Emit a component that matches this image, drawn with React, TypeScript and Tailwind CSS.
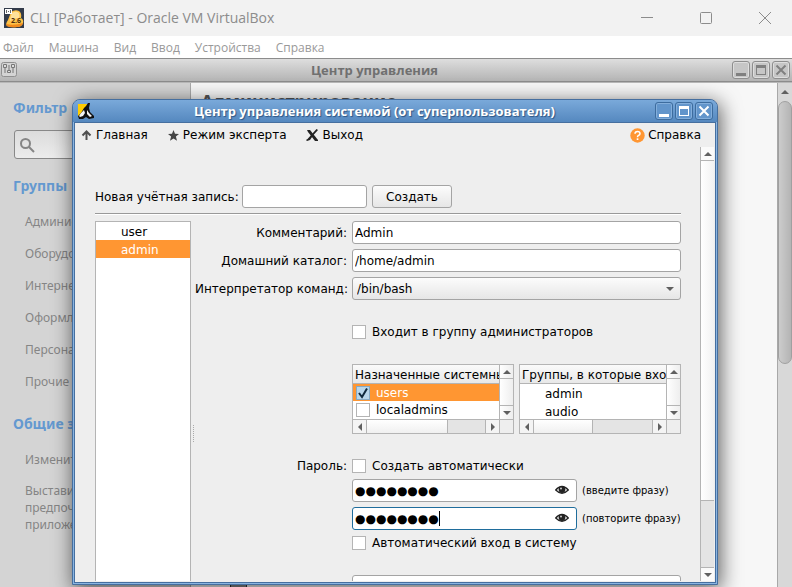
import type { ReactNode } from "react";

const UI = "font-['DejaVu_Sans','Noto_Sans',sans-serif]";

function Arrow({ dir }: { dir: "up" | "down" | "left" | "right" }) {
  const points = {
    up: "0,5 4,1 8,5",
    down: "0,1 8,1 4,5",
    left: "5,0 1,4 5,8",
    right: "1,0 5,4 1,8",
  }[dir];
  const vertical = dir === "up" || dir === "down";
  return (
    <svg width={vertical ? 8 : 6} height={vertical ? 6 : 8} className="shrink-0" aria-hidden="true">
      <polygon points={points} fill="#606060" />
    </svg>
  );
}

function FrameButtons({ active }: { active: boolean }) {
  const color = active ? "#ffffff" : "#808080";
  const glyphs: [string, ReactNode][] = [
    ["Свернуть", <rect key="m" x="3" y="11" width="10" height="3" fill={color} />],
    [
      "Развернуть",
      <g key="x">
        <rect x="3.5" y="3.5" width="9" height="9" fill="none" stroke={color} />
        <rect x="3" y="3" width="10" height="3" fill={color} />
      </g>,
    ],
    ["Закрыть", <path key="c" d="M3.500 3.500l9 9M12.500 3.500l-9 9" stroke={color} strokeWidth="2" fill="none" />],
  ];
  return (
    <div className="flex shrink-0 gap-0.5">
      {glyphs.map(([label, glyph]) => (
        <button
          key={label}
          aria-label={label}
          className={
            active
              ? "size-[18px] rounded-[3px] border border-[#3d6c9e] bg-[#6295cb] shadow-[inset_0_0_0_1px_#83aedb]"
              : "size-[18px] rounded-[3px] border border-[#8e8e8e] bg-[#c6c6c6] shadow-[inset_0_0_0_1px_#dedede]"
          }
        >
          <svg width="16" height="16" aria-hidden="true">{glyph}</svg>
        </button>
      ))}
    </div>
  );
}

function VmTitleBar() {
  return (
    <header className="flex h-9 shrink-0 items-center bg-[#f2f2f2] pl-1 font-['Open_Sans','Noto_Sans',sans-serif]">
      <svg width="20" height="20" viewBox="0 0 20 20" aria-hidden="true">
        <rect width="20" height="20" fill="#333b4a" />
        <path d="M7 4q4-3 8-1 3 2 2 7 3 2 2 5-1 4-6 4-6 1-10-1-2-2 1-6z" fill="#ffc247" />
        <path d="M8 5q4-3 7 0 1 3 0 5-5 0-9 3 0-4 2-8z" fill="#ffe19a" />
        <path d="M2 16q8 2 17-1-1 4-6 4-6 1-10-1z" fill="#f28a1c" />
        <rect x="1" y="1" width="7" height="5" fill="#fff" />
        <path d="M2.500 2v3M4 3.500h1M6.500 2v3" stroke="#666" />
        <text x="7" y="15" fontSize="7" fontWeight="700" fill="#4a2a10">2.6</text>
      </svg>
      <h1 className="ml-1.5 flex-1 text-sm leading-5 text-[#8c8c8c]">CLI [Работает] - Oracle VM VirtualBox</h1>
      <div className="flex items-center gap-[47px] pr-[21px]">
        <button aria-label="Свернуть">
          <svg width="12" height="12"><path d="M0 5.500h12" stroke="#8c8c8c" /></svg>
        </button>
        <button aria-label="Развернуть">
          <svg width="12" height="12"><rect x=".5" y=".5" width="11" height="11" rx="1" fill="none" stroke="#8c8c8c" /></svg>
        </button>
        <button aria-label="Закрыть">
          <svg width="12" height="12"><path d="M0 0l12 12M12 0L0 12" stroke="#8c8c8c" /></svg>
        </button>
      </div>
    </header>
  );
}

function VmMenu() {
  return (
    <nav className="flex h-[22px] shrink-0 items-center gap-[15px] bg-white pt-px pl-[3px] font-['Open_Sans','Noto_Sans',sans-serif] text-xs text-[#999]">
      {["Файл", "Машина", "Вид", "Ввод", "Устройства", "Справка"].map((item) => (
        <button key={item}>{item}</button>
      ))}
    </nav>
  );
}

function SideHeading({ children }: { children: ReactNode }) {
  return <h3 className="pl-[13px] text-sm leading-5 font-bold whitespace-nowrap text-[#6499d0]">{children}</h3>;
}

function Sidebar() {
  return (
    <aside className="w-[190px] shrink-0 overflow-hidden bg-[#d4d4d4] pt-[15px] text-xs text-[#858585]">
      <SideHeading>Фильтр</SideHeading>
      <div className="mt-3 ml-3.5 flex h-[29px] w-40 items-center rounded-[3px] border border-[#888] bg-linear-to-b from-[#dcdcdc] to-[#ececec] pl-1">
        <svg width="16" height="16" fill="none" stroke="#858585" strokeWidth="2" aria-hidden="true">
          <circle cx="6.500" cy="6.500" r="4.500" />
          <path d="M10 10l5 5" />
        </svg>
        <input aria-label="Фильтр" className="w-28 bg-transparent outline-none" />
      </div>
      <div className="mt-[17px]">
        <SideHeading>Группы</SideHeading>
      </div>
      <ul className="mt-[17px] flex flex-col gap-[14px] pl-[25px] leading-[18px]">
        {["Администрирование", "Оборудование", "Интернет и сеть", "Оформление", "Персональные", "Прочие"].map((g) => (
          <li key={g}>{g}</li>
        ))}
      </ul>
      <div className="mt-[23px]">
        <SideHeading>Общие задачи</SideHeading>
      </div>
      <ul className="mt-[17px] flex w-[140px] flex-col gap-[14px] pl-[25px] leading-[17px]">
        <li className="whitespace-nowrap">Изменить тему</li>
        <li>Выставить предпочитаемые приложения</li>
      </ul>
    </aside>
  );
}

function ControlCenter() {
  return (
    <section className="flex h-full flex-col border-t border-[#8c8c8c] font-['Noto_Sans','Open_Sans',sans-serif]">
      <div className="flex h-[23px] shrink-0 items-center border-b border-[#8c8c8c] bg-linear-to-b from-[#dedede] to-[#b4b4b4] pr-0.5 pl-px">
        <svg width="16" height="16" aria-hidden="true">
          <rect x=".5" y=".5" width="15" height="14" rx="2" fill="#d4d4d4" stroke="#909090" />
          <path d="M4 6v5M8 3v6M12 6v5" stroke="#777" />
          <path d="M2.500 2.500h3v3h-3zM6.500 8.500h3v2h-3zM10.500 2.500h3v3h-3z" fill="#ddd" stroke="#777" />
        </svg>
        <h2 className="flex-1 text-center font-['Open_Sans'] text-[13px] leading-5 font-bold text-[#707070]">Центр управления</h2>
        <FrameButtons active={false} />
      </div>
      <div className="flex min-h-0 flex-1 border-t border-[#b8b8b8]">
        <Sidebar />
        <main className="flex flex-1 flex-col justify-between overflow-hidden border-l border-[#aaa] bg-[#f7f7f7]">
          <h2 className="mt-1 ml-2.5 text-lg leading-7 font-bold text-[#555]">Администрирование</h2>
          <div className="ml-[39px] h-0.5 w-[17px] border-x border-[#333] bg-[#888]" />
        </main>
        <div className="flex w-[15px] shrink-0 flex-col items-center border-l border-[#a8a8a8] bg-[#d8d8d8]">
          <div className="flex h-[18px] items-center">
            <Arrow dir="up" />
          </div>
          <div className="h-[263px] w-full rounded-full border border-[#a0a0a0] bg-linear-to-r from-[#cccccc] to-[#b4b4b4]" />
        </div>
      </div>
    </section>
  );
}

function Check({ label, id }: { label: string; id: string }) {
  return (
    <div className="flex h-3.5 items-center gap-1.5">
      <input id={id} type="checkbox" className="size-3.5 shrink-0 appearance-none border border-[#b4b4b4] bg-white" />
      <label htmlFor={id} className="whitespace-nowrap">{label}</label>
    </div>
  );
}

function GroupList({ title, thumb, children }: { title: string; thumb: string; children: ReactNode }) {
  return (
    <div className="flex h-[70px] min-w-0 flex-1 flex-col border border-[#b4b4b4] bg-white">
      <div className="flex min-h-0 flex-1">
        <div className="min-w-0 flex-1 overflow-hidden">
          <div className="h-[19px] overflow-hidden border-b border-[#b4b4b4] bg-linear-to-b from-[#fafafa] to-[#e8e8e8] pl-0.5 leading-5 whitespace-nowrap">
            {title}
          </div>
          {children}
        </div>
        <div className="flex w-3.5 shrink-0 flex-col border-l border-[#b4b4b4] bg-linear-to-r from-white to-[#eee]">
          <div className="flex h-3.5 items-center justify-center border-b border-[#b4b4b4]"><Arrow dir="up" /></div>
          <div className="flex-1" />
          <div className="flex h-3.5 items-center justify-center border-t border-[#b4b4b4]"><Arrow dir="down" /></div>
        </div>
      </div>
      <div className="flex h-3.5 shrink-0 border-t border-[#b4b4b4] bg-[#f4f4f4]">
        <div className="flex w-3.5 items-center justify-center border-r border-[#b4b4b4]"><Arrow dir="left" /></div>
        <div className="flex-1 bg-[#e4e4e4]">
          <div className={`h-full border-r border-[#b4b4b4] bg-linear-to-b from-white to-[#f0f0f0] ${thumb}`} />
        </div>
        <div className="flex w-3.5 items-center justify-center border-l border-[#b4b4b4]"><Arrow dir="right" /></div>
        <div className="w-3.5 border-l border-[#b4b4b4] bg-[#eee]" />
      </div>
    </div>
  );
}

const FIELD = "h-[23px] w-full rounded-[3px] border border-[#a4a4a4] bg-white px-0.5 outline-none";

function Password({ id, hint, focused }: { id: string; hint: string; focused?: boolean }) {
  return (
    <div className="flex items-center gap-[5px]">
      <div className="relative min-w-0 flex-1">
        <input
          id={id}
          readOnly
          aria-label={hint}
          value="●●●●●●●●"
          className={
            focused
              ? "block h-[23px] w-full rounded-[3px] border border-[#1f6d9c] bg-white px-0.5 outline-none"
              : "block h-[23px] w-full rounded-[3px] border border-[#a4a4a4] bg-white px-0.5 outline-none"
          }
        />
        {focused && <span className="absolute top-1 left-[87px] h-[15px] w-px bg-black" />}
        <button aria-label="Показать пароль" className="absolute top-1.5 right-2">
          <svg width="14" height="10" className="block">
            <path d="M.7 5Q7-2 13.300 5Q7 11.500.7 5Z" fill="#fff" stroke="#222" strokeWidth="1.300" />
            <circle cx="7" cy="4.500" r="3.400" fill="#222" />
            <circle cx="6" cy="3.500" r="1" fill="#ccc" />
          </svg>
        </button>
      </div>
      <label htmlFor={id} className="w-[99px] text-[10px] whitespace-nowrap">{hint}</label>
    </div>
  );
}

function AccountForm() {
  return (
    <div className="grid min-w-0 flex-1 grid-cols-[152px_minmax(0,1fr)] content-start items-center gap-x-[5px]">
      <label htmlFor="comment" className="text-right">Комментарий:</label>
      <input id="comment" defaultValue="Admin" className={FIELD} />
      <label htmlFor="home" className="mt-[5px] text-right">Домашний каталог:</label>
      <div className="mt-[5px] flex"><input id="home" defaultValue="/home/admin" className={FIELD} /></div>
      <label htmlFor="shell" className="mt-[5px] text-right whitespace-nowrap">Интерпретатор команд:</label>
      <div className="relative mt-[5px]">
        <select
          id="shell"
          className="block h-[23px] w-full appearance-none rounded-[3px] border border-[#a4a4a4] bg-linear-to-b from-[#fcfcfc] to-[#e6e6e6] px-1 outline-none"
        >
          <option>/bin/bash</option>
        </select>
        <span className="pointer-events-none absolute inset-y-0 right-[7px] flex items-center"><Arrow dir="down" /></span>
      </div>
      <div className="col-start-2 mt-[25px]"><Check id="admins" label="Входит в группу администраторов" /></div>
      <div className="col-start-2 mt-[25px] flex gap-[5px]">
        <GroupList title="Назначенные системные группы" thumb="w-[69%]">
          <div className="flex h-[17px] items-center gap-1.5 bg-[#ff9632] pl-[3px] text-white">
            <span className="relative flex">
              <input id="users" type="checkbox" defaultChecked className="size-3.5 appearance-none border border-[#86a9c4] bg-[#b9d6ea]" />
              <svg width="14" height="14" className="pointer-events-none absolute inset-0">
                <path d="M3 7l3 4 5-8.500" fill="none" stroke="#10293d" strokeWidth="2" />
              </svg>
            </span>
            <label htmlFor="users">users</label>
          </div>
          <div className="flex h-[17px] items-center gap-1.5 pl-[3px]">
            <input id="localadmins" type="checkbox" className="size-3.5 appearance-none border border-[#b4b4b4] bg-white" />
            <label htmlFor="localadmins">localadmins</label>
          </div>
        </GroupList>
        <GroupList title="Группы, в которые входит пользователь" thumb="w-1/2">
          <ul className="pt-px pl-[25px] leading-[18px]">
            <li>admin</li>
            <li>audio</li>
          </ul>
        </GroupList>
      </div>
      <span className="mt-[25px] h-3.5 text-right leading-3.5">Пароль:</span>
      <div className="mt-[25px]"><Check id="auto" label="Создать автоматически" /></div>
      <div className="col-start-2 mt-1.5 flex flex-col gap-[5px]">
        <Password id="pass1" hint="(введите фразу)" />
        <Password id="pass2" hint="(повторите фразу)" focused />
        <div className="pt-px"><Check id="autologin" label="Автоматический вход в систему" /></div>
        <div className="mt-5 flex"><input aria-label="Дополнительно" className={FIELD} /></div>
      </div>
    </div>
  );
}

function Toolbar() {
  return (
    <div className="flex h-6 shrink-0 items-center pr-3.5 pl-1.5">
      <button className="flex items-center gap-1">
        <svg width="11" height="10" fill="none" stroke="#505050" strokeWidth="2" aria-hidden="true">
          <path d="M5.500 10V2M1.500 5.500l4-4 4 4" />
        </svg>
        Главная
      </button>
      <button className="ml-5 flex items-center gap-1">
        <svg width="11" height="11" viewBox="0 0 11 11" aria-hidden="true">
          <path d="M5.500 0l1.500 3.800 4 .2-3.100 2.500 1.100 4.200-3.500-2.300L2 10.700l1.100-4.200L0 4l4-.2z" fill="#444" />
        </svg>
        Режим эксперта
      </button>
      <button className="ml-[19px] flex items-center gap-1">
        <svg width="13" height="13" fill="#222" aria-hidden="true">
          <path d="M1 1h3l8 10v1H9L2 3z" />
          <path d="M10.500 0L12 1 7.500 6 4 11 1 12 0 11l1.500-1L6 5z" />
        </svg>
        Выход
      </button>
      <button className="ml-auto flex items-center gap-[3px]">
        <svg width="15" height="15" aria-hidden="true">
          <circle cx="7.500" cy="7.500" r="7.200" fill="#ff9632" />
          <path d="M5 5.800Q5 3.500 7.500 3.500T10 5.700Q10 6.800 8.300 7.600Q7.500 8 7.500 9.200" fill="none" stroke="#fff" strokeWidth="1.500" />
          <rect x="6.700" y="10.300" width="1.700" height="1.700" fill="#fff" />
        </svg>
        Справка
      </button>
    </div>
  );
}

function Dialog() {
  return (
    <section
      className={`absolute top-[41px] right-[74px] bottom-0.5 left-[72px] flex flex-col rounded-t-lg border border-[#466f9f] bg-[#8ab5e2] shadow-[2px_4px_20px_1px_rgba(0,0,0,0.6)] ${UI}`}
    >
      <div className="flex h-[22px] shrink-0 items-center rounded-t-[7px] bg-linear-to-b from-[#7aa9da] to-[#5588bf] pr-1 pl-[5px]">
        <svg width="16" height="16" viewBox="0 0 16 16" aria-hidden="true">
          <path d="M0 1h9v12H0z" fill="#ffcc00" />
          <path d="M8 3l2-3h2l-1 5 1 4 4 4v2l-5 1-3-2-3 2H1l-1-3 3-3 3-5z" fill="#111" />
          <path d="M3 10l3-3 1 3-2 3-3 1-1-1zM9 7l2 3 3 3-2 1-3-3z" fill="#f4f4f4" />
        </svg>
        <h2 className="flex-1 text-center font-['Open_Sans'] text-[13px] leading-5 font-bold text-white [text-shadow:1px_1px_1px_#2d5584]">
          Центр управления системой (от суперпользователя)
        </h2>
        <FrameButtons active />
      </div>
      <div className="mx-px mb-px flex min-h-0 flex-1 flex-col border border-[#466f9f] bg-[#eee] text-xs leading-4 text-black">
        <Toolbar />
        <div className="flex min-h-0 flex-1 pr-px pb-px">
          <div className="flex min-w-0 flex-1 flex-col overflow-hidden pr-[19px] pl-5">
            <form className="mt-[38px] flex shrink-0 items-center gap-[5px]" onSubmit={(e) => e.preventDefault()}>
              <label htmlFor="account" className="w-[142px] whitespace-nowrap">Новая учётная запись:</label>
              <div className="w-[125px]"><input id="account" className={`block ${FIELD}`} /></div>
              <button className="h-[23px] w-20 rounded-[3px] border border-[#a4a4a4] bg-linear-to-b from-[#fcfcfc] to-[#e6e6e6]">
                Создать
              </button>
            </form>
            <hr className="mt-[5px] mb-[7px] border-t border-[#999] shadow-[0_1px_0_#fff]" />
            <div className="flex min-h-0 flex-1">
              <ul className="w-24 shrink-0 border-x border-t border-[#b4b4b4] bg-white leading-5">
                <li className="h-[18px] pl-[25px]">user</li>
                <li className="h-[18px] bg-[#ff9632] pl-[25px] text-white">admin</li>
              </ul>
              <div className="flex w-1 shrink-0 items-center justify-center">
                <span className="mt-16 h-[17px] border-l border-dotted border-[#aaa]" />
              </div>
              <AccountForm />
            </div>
          </div>
          <div className="flex w-3.5 shrink-0 flex-col border-l border-[#b4b4b4] bg-[#e4e4e4]">
            <div className="flex h-3.5 items-center justify-center border-b border-[#b4b4b4] bg-[#fafafa]"><Arrow dir="up" /></div>
            <div className="flex-[340] border-b border-[#b4b4b4] bg-linear-to-r from-white to-[#f2f2f2]" />
            <div className="flex-[66]" />
            <div className="flex h-3.5 items-center justify-center border-t border-[#b4b4b4] bg-[#fafafa]"><Arrow dir="down" /></div>
          </div>
        </div>
      </div>
    </section>
  );
}

export default function App() {
  return (
    <div className="flex h-screen flex-col overflow-hidden">
      <VmTitleBar />
      <VmMenu />
      <div className="relative min-h-0 flex-1 overflow-hidden">
        <ControlCenter />
        <Dialog />
      </div>
    </div>
  );
}
